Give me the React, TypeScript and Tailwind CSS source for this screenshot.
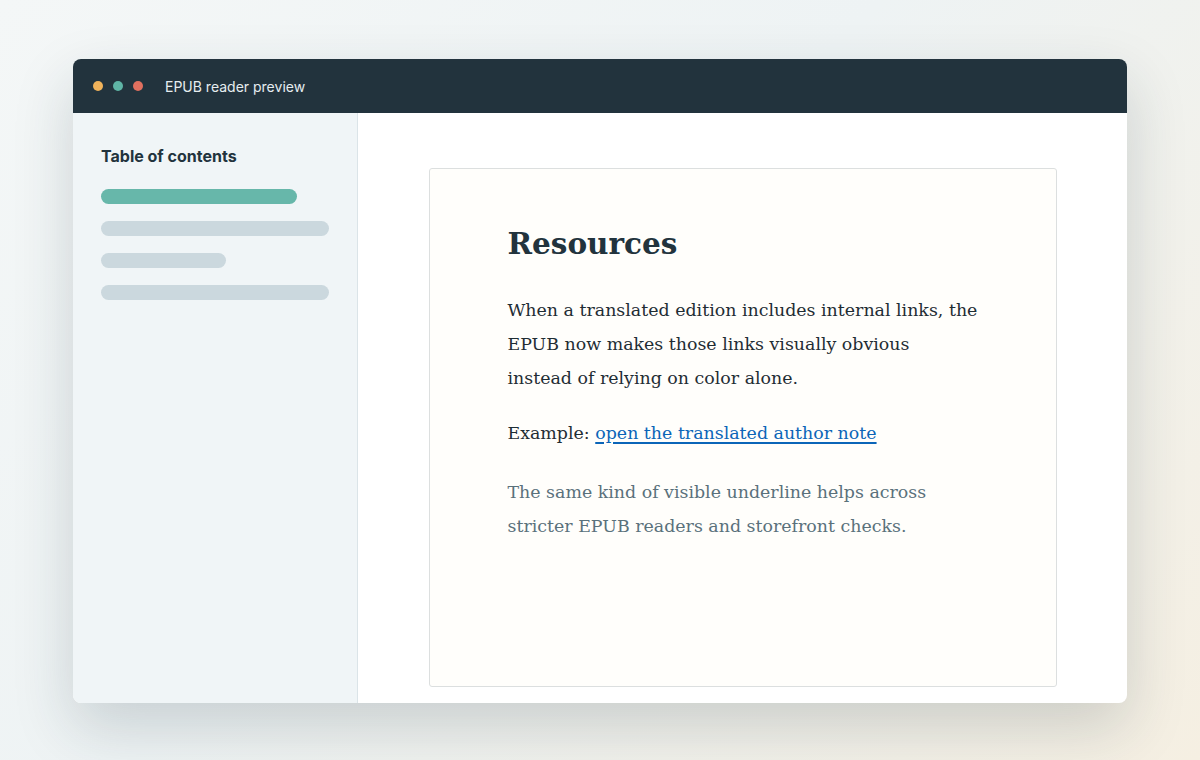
const SANS = { fontFamily: 'Inter, "Noto Sans", sans-serif' };

const tocBars = [
  { w: 'w-[196px]', c: 'bg-[#67b7aa]' },
  { w: 'w-[228px]', c: 'bg-[#cbd8de]' },
  { w: 'w-[125px]', c: 'bg-[#cbd8de]' },
  { w: 'w-[228px]', c: 'bg-[#cbd8de]' },
];

export default function App() {
  return (
    <div className="flex h-[760px] w-[1200px] items-start justify-center bg-[linear-gradient(135deg,#f4f7f7_0%,#eef3f4_45%,#f5efe2_100%)] pt-[59px]">
      <div className="flex h-[644px] w-[1054px] flex-col overflow-hidden rounded-[8px] bg-white shadow-[0_24px_60px_rgba(30,50,60,0.18)]">
        <div className="flex h-[54px] shrink-0 items-center bg-[#22333d] pl-[20px]" style={SANS}>
          <span className="h-[10px] w-[10px] rounded-full bg-[#f0b35b]" />
          <span className="ml-[10px] h-[10px] w-[10px] rounded-full bg-[#5fb5a6]" />
          <span className="ml-[10px] h-[10px] w-[10px] rounded-full bg-[#e0705f]" />
          <span className="ml-[22px] text-[14px] text-[#e6edf0]">EPUB reader preview</span>
        </div>
        <div className="flex min-h-0 flex-1">
          <aside className="w-[285px] shrink-0 border-r border-[#dbe4e8] bg-[#f0f5f7] px-[28px] pt-[31px]" style={SANS}>
            <h2 className="text-[16px] font-bold text-[#22333d]">Table of contents</h2>
            <div className="mt-[21px] flex flex-col gap-[17px]">
              {tocBars.map((b, i) => (
                <div key={i} className={`h-[15px] rounded-full ${b.w} ${b.c}`} />
              ))}
            </div>
          </aside>
          <main className="flex flex-1 justify-center pt-[55px]">
            <article
              className="h-[519px] w-[628px] rounded-[3px] border border-[#dcdfdf] bg-[#fffefb] px-[78px] pt-[52px]"
              style={{ fontFamily: '"DejaVu Serif", "Liberation Serif", serif' }}
            >
              <h1 className="text-[29.5px] font-bold leading-[46px] text-[#22333d]">Resources</h1>
              <p className="mt-[26px] text-[17.4px] leading-[34px] text-[#1f2d34]">
                When a translated edition includes internal links, the EPUB now makes those links visually obvious instead of relying on color alone.
              </p>
              <p className="mt-[21px] text-[17.4px] leading-[34px] text-[#1f2d34]">
                Example:{' '}
                <a href="#" className="text-[#0b65b8] underline decoration-[1.5px] underline-offset-[3px]">
                  open the translated author note
                </a>
              </p>
              <p className="mt-[25px] max-w-[430px] text-[17.4px] leading-[34px] text-[#5a717b]">
                The same kind of visible underline helps across stricter EPUB readers and storefront checks.
              </p>
            </article>
          </main>
        </div>
      </div>
    </div>
  );
}
